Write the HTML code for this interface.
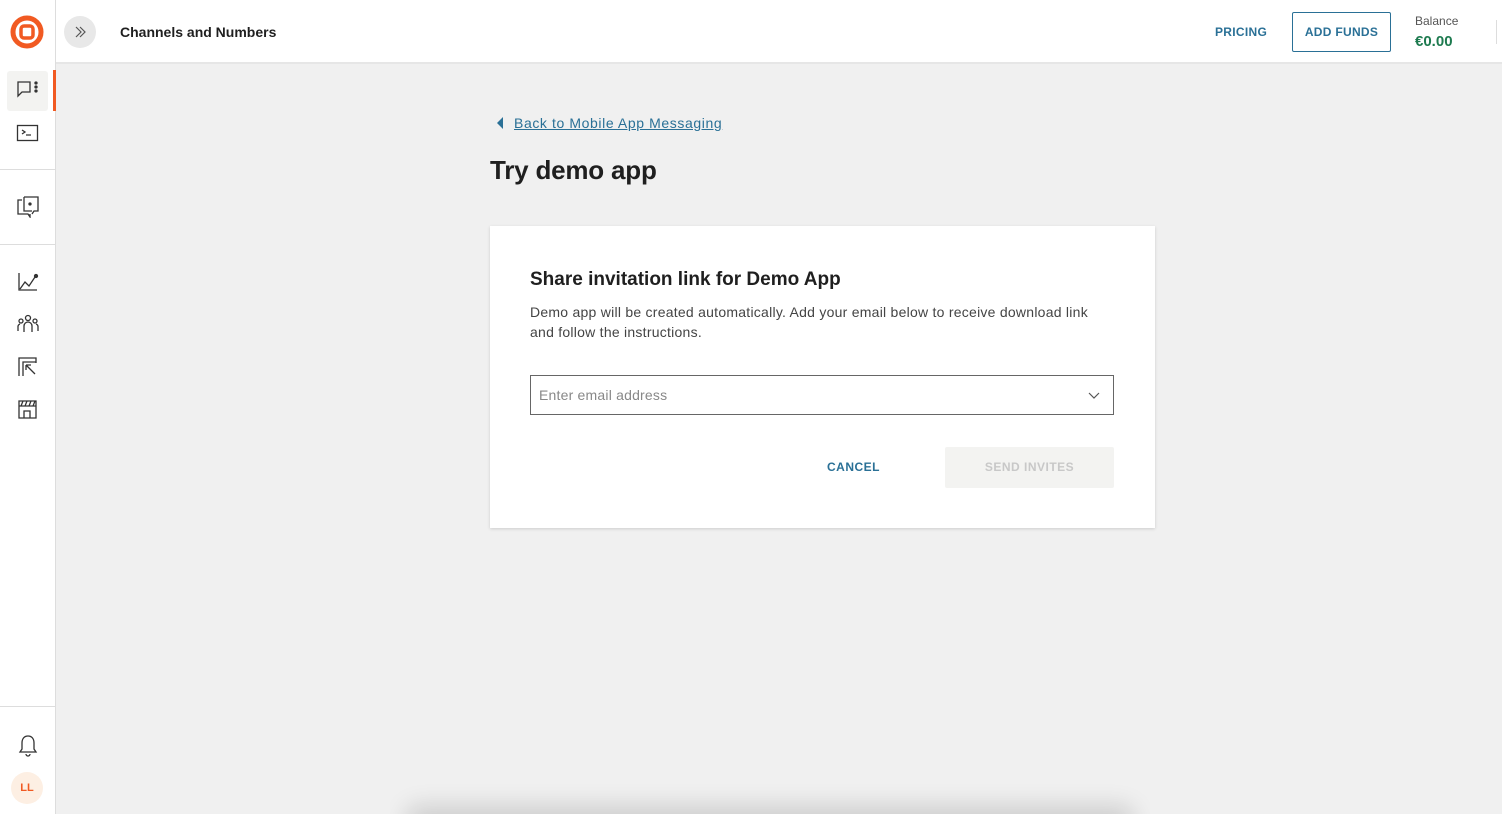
<!DOCTYPE html>
<html style="overflow:hidden;width:1502px;height:814px"><head><meta charset="utf-8"><style>
*{box-sizing:border-box;margin:0;padding:0}
body{width:1502px;height:814px;overflow:hidden;background:#f0f0f0;font-family:"Liberation Sans",sans-serif;position:relative;color:#1f1f1f}
.side{position:absolute;left:0;top:0;width:56px;height:814px;background:#fff;border-right:1px solid #ddd}
.hdr{position:absolute;left:56px;top:0;right:0;height:64px;background:#fff;border-bottom:2px solid #e6e6e6}
.ic{position:absolute;left:16px}
.hr{position:absolute;left:0;width:55px;height:1px;background:#ddd}
.card{position:absolute;left:490px;top:226px;width:665px;height:302px;background:#fff;box-shadow:0 1px 3px rgba(0,0,0,.15)}
</style></head><body>
<div class="side">
<svg style="position:absolute;left:10px;top:15px" width="34" height="34" viewBox="0 0 34 34"><circle cx="17" cy="17" r="14" fill="none" stroke="#f15a22" stroke-width="5"/><rect x="11" y="11" width="12" height="12" rx="3" fill="none" stroke="#f15a22" stroke-width="3.5"/></svg>
<div style="position:absolute;left:7px;top:71px;width:41px;height:40px;background:#f3f3f1;border-radius:3px"></div>
<div style="position:absolute;left:53px;top:70px;width:3px;height:41px;background:#f15a22"></div>
<svg class="ic" style="top:80px" width="24" height="20" viewBox="0 0 24 20" fill="none" stroke="#333" stroke-width="1.3"><path d="M2 2h12v10H6l-4 4z"/><circle cx="20" cy="3" r="1" fill="#333"/><circle cx="20" cy="7" r="1" fill="#333"/><circle cx="20" cy="11" r="1" fill="#333"/></svg>
<svg class="ic" style="top:124px" width="24" height="18" viewBox="0 0 24 18" fill="none" stroke="#333" stroke-width="1.3"><rect x="1.5" y="1.5" width="20" height="15"/><path d="M6 6l3 2-3 2M10 11h5"/></svg>
<div class="hr" style="top:169px"></div>
<svg class="ic" style="top:196px" width="24" height="22" viewBox="0 0 24 22" fill="none" stroke="#333" stroke-width="1.3"><path d="M6 4H2v14h10l2 3v-3M8 1h14v14h-4l-2 3"/><path d="M8 1v14h8"/><circle cx="14" cy="8" r="1" fill="#333"/></svg>
<div class="hr" style="top:244px"></div>
<svg class="ic" style="top:272px" width="24" height="20" viewBox="0 0 24 20" fill="none" stroke="#333" stroke-width="1.3"><path d="M3 1v17h18M4 17l5-7 4 4 6-9"/><circle cx="20" cy="4" r="1.5" fill="#333"/></svg>
<svg class="ic" style="top:314px" width="24" height="20" viewBox="0 0 24 20" fill="none" stroke="#333" stroke-width="1.3"><circle cx="12" cy="4" r="2.5"/><circle cx="5" cy="7" r="2"/><circle cx="19" cy="7" r="2"/><path d="M8 18v-6a4 4 0 018 0v6M2 17v-4a3 3 0 012-3M22 17v-4a3 3 0 00-2-3"/></svg>
<svg class="ic" style="top:357px" width="24" height="20" viewBox="0 0 24 20" fill="none" stroke="#333" stroke-width="1.3"><path d="M3 19V1h17v5M7 19V5h13M10 8l9 9M10 8v5M10 8h5"/></svg>
<svg class="ic" style="top:399px" width="24" height="20" viewBox="0 0 24 20" fill="none" stroke="#333" stroke-width="1.3"><path d="M3 2h17v17H3zM3 7h17M7 2l-2 5M11 2l-2 5M15 2l-2 5M19 2l-2 5M8 19v-7h6v7"/></svg>
<div class="hr" style="top:706px"></div>
<svg class="ic" style="top:734px" width="24" height="24" viewBox="0 0 24 24" fill="none" stroke="#333" stroke-width="1.3"><path d="M12 2c-4 0-6 3-6 7v6l-2 3h16l-2-3V9c0-4-2-7-6-7zM10 20a2 2 0 004 0"/></svg>
<div style="position:absolute;left:11px;top:772px;width:32px;height:32px;border-radius:50%;background:#fdefe3;color:#f15a22;font-size:11px;font-weight:bold;text-align:center;line-height:32px">LL</div>
</div>
<div class="hdr">
<div style="position:absolute;left:8px;top:16px;width:32px;height:32px;border-radius:50%;background:#e8e8e8"></div>
<svg style="position:absolute;left:16px;top:24px" width="16" height="16" viewBox="0 0 16 16" fill="none" stroke="#555" stroke-width="1.2"><path d="M4 3l5 5-5 5M8 3l5 5-5 5"/></svg>
<div style="position:absolute;left:64px;top:24px;font-size:14px;font-weight:bold;color:#1f1f1f">Channels and Numbers</div>
<div style="position:absolute;left:1159px;top:25px;font-size:12px;font-weight:bold;color:#2a7096;letter-spacing:.3px">PRICING</div>
<div style="position:absolute;left:1236px;top:12px;width:99px;height:40px;border:1px solid #2a7096;border-radius:2px;font-size:12px;font-weight:bold;color:#2a7096;text-align:center;line-height:38px;letter-spacing:.3px">ADD FUNDS</div>
<div style="position:absolute;left:1359px;top:14px;font-size:12px;color:#555">Balance</div>
<div style="position:absolute;left:1359px;top:33px;font-size:15px;font-weight:bold;color:#1d7a4f">€0.00</div>
<div style="position:absolute;left:1440px;top:20px;width:1px;height:24px;background:#ddd"></div>
</div>
<svg style="position:absolute;left:496px;top:116px" width="8" height="14" viewBox="0 0 8 14"><path d="M7 1L1 7l6 6z" fill="#2a7096"/></svg>
<div style="position:absolute;left:514px;top:115px;font-size:14px;color:#2a7096;text-decoration:underline;letter-spacing:.6px">Back to Mobile App Messaging</div>
<div style="position:absolute;left:490px;top:155px;font-size:26px;font-weight:bold;color:#1f1f1f;letter-spacing:-.2px">Try demo app</div>
<div class="card">
<div style="position:absolute;left:40px;top:43px;font-size:19px;font-weight:bold">Share invitation link for Demo App</div>
<div style="position:absolute;left:40px;top:76px;width:582px;font-size:14px;line-height:20px;color:#444;letter-spacing:.25px">Demo app will be created automatically. Add your email below to receive download link and follow the instructions.</div>
<div style="position:absolute;left:40px;top:149px;width:584px;height:40px;border:1px solid #666"><span style="position:absolute;left:8px;top:11px;font-size:14px;color:#888;letter-spacing:.2px">Enter email address</span>
<svg style="position:absolute;left:556px;top:14px" width="14" height="10" viewBox="0 0 14 10" fill="none" stroke="#555" stroke-width="1.2"><path d="M2 3l5 5 5-5"/></svg></div>
<div style="position:absolute;left:337px;top:234px;font-size:12px;font-weight:bold;color:#2a7096;letter-spacing:.5px">CANCEL</div>
<div style="position:absolute;left:455px;top:221px;width:169px;height:41px;background:#f3f3f1;border-radius:2px;font-size:12px;font-weight:bold;color:#c8c8c8;text-align:center;line-height:41px;letter-spacing:.5px">SEND INVITES</div>
</div>
<div style="position:absolute;left:390px;top:780px;width:760px;height:34px;overflow:hidden"><div style="position:absolute;left:15px;top:34px;width:730px;height:30px;box-shadow:0 -8px 24px rgba(0,0,0,.15);border-radius:20px"></div></div>
</body></html>
